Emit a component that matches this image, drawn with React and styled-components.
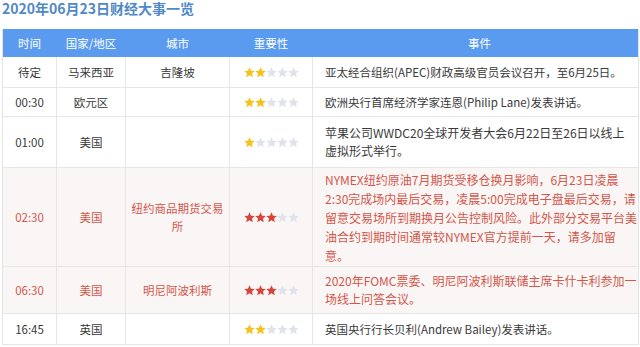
import React from 'react';
import styled, { createGlobalStyle } from 'styled-components';

const GlobalStyle = createGlobalStyle`
  html, body {
    margin: 0;
    padding: 0;
    background: #fff;
  }
  body {
    font-family: "Noto Sans CJK SC", "Noto Sans", sans-serif;
  }
`;

const Page = styled.div`
  width: 640px;
  height: 347px;
  padding: 0 3px 0 2px;
  box-sizing: border-box;
  overflow: hidden;
`;

const Title = styled.h1`
  margin: 0 0 12px;
  font-size: 14px;
  line-height: 17px;
  font-weight: bold;
  color: #5088c8;
`;

const Table = styled.div`
  width: 635px;
  border-left: 1px solid #e4e4e4;
  border-right: 1px solid #e4e4e4;
`;

const Row = styled.div`
  display: grid;
  grid-template-columns: 54px 69px 104px 83px 1fr;
  height: ${(p) => p.$h}px;
  box-sizing: border-box;
  background: ${(p) => (p.$hot ? '#fbf6f6' : '#fff')};
  color: ${(p) => (p.$hot ? '#d2564a' : '#3a3a3a')};
  border-bottom: 1px solid #e6e6e6;
`;

const HeadRow = styled(Row)`
  background: #5a9bef;
  color: #fff;
  border-bottom: none;
`;

const Cell = styled.div`
  display: flex;
  align-items: center;
  justify-content: center;
  text-align: center;
  padding: 0 4px;
  font-size: 11.5px;
  line-height: 18px;
  border-right: 1px solid ${(p) => (p.$head ? 'transparent' : '#e6e6e6')};
  white-space: pre;
`;

const EventCell = styled(Cell)`
  justify-content: ${(p) => (p.$head ? 'center' : 'flex-start')};
  text-align: left;
  padding: 0 4px 0 12px;
  border-right: none;
  font-size: ${(p) => p.$fs || 11.5}px;
  line-height: ${(p) => p.$lh || 18}px;
`;

const StarWrap = styled.div`
  display: flex;
`;

const Star = ({ color }) => (
  <svg width="11" height="11" viewBox="1 1 22 22">
    <path
      d="M12 1.5l3.1 7 7.4.6-5.6 4.9 1.7 7.4L12 17.5l-6.6 3.9 1.7-7.4L1.5 9.1l7.4-.6z"
      fill={color}
    />
  </svg>
);

const Stars = ({ n, hot }) => (
  <StarWrap>
    {[0, 1, 2, 3, 4].map((i) => (
      <Star key={i} color={i < n ? (hot ? '#d8433a' : '#f5c21b') : '#e0e2ec'} />
    ))}
  </StarWrap>
);

const rows = [
  { h: 31, time: '待定', area: '马来西亚', city: '吉隆坡', stars: 2,
    event: '亚太经合组织(APEC)财政高级官员会议召开，至6月25日。' },
  { h: 29, time: '00:30', area: '欧元区', city: '', stars: 2,
    event: '欧洲央行首席经济学家连恩(Philip Lane)发表讲话。' },
  { h: 51, fs: 12, time: '01:00', area: '美国', city: '', stars: 1,
    event: '苹果公司WWDC20全球开发者大会6月22日至26日以线上\n虚拟形式举行。' },
  { h: 99, hot: true, fs: 12, lh: 19, time: '02:30', area: '美国', city: '纽约商品期货交易\n所', stars: 3,
    event:
      'NYMEX纽约原油7月期货受移仓换月影响，6月23日凌晨\n2:30完成场内最后交易，凌晨5:00完成电子盘最后交易，请\n留意交易场所到期换月公告控制风险。此外部分交易平台美\n油合约到期时间通常较NYMEX官方提前一天，请多加留\n意。' },
  { h: 47, hot: true, fs: 12, time: '06:30', area: '美国', city: '明尼阿波利斯', stars: 3,
    event: '2020年FOMC票委、明尼阿波利斯联储主席卡什卡利参加一\n场线上问答会议。' },
  { h: 31, time: '16:45', area: '英国', city: '', stars: 2,
    event: '英国央行行长贝利(Andrew Bailey)发表讲话。' },
];

export default function App() {
  return (
    <Page>
      <GlobalStyle />
      <Title>2020年06月23日财经大事一览</Title>
      <Table>
        <HeadRow $h={28}>
          <Cell $head>时间</Cell>
          <Cell $head>国家/地区</Cell>
          <Cell $head>城市</Cell>
          <Cell $head>重要性</Cell>
          <EventCell $head>事件</EventCell>
        </HeadRow>
        {rows.map((r) => (
          <Row key={r.time} $h={r.h} $hot={r.hot}>
            <Cell>{r.time}</Cell>
            <Cell>{r.area}</Cell>
            <Cell>{r.city}</Cell>
            <Cell>
              <Stars n={r.stars} hot={r.hot} />
            </Cell>
            <EventCell $fs={r.fs} $lh={r.lh}>{r.event}</EventCell>
          </Row>
        ))}
      </Table>
    </Page>
  );
}
